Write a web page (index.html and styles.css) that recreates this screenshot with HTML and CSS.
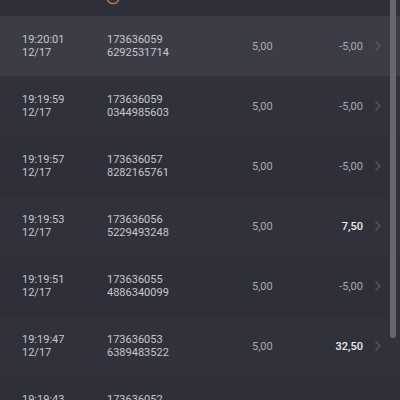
FILE: index.html
```html
<!DOCTYPE html>
<html>
<head>
<meta charset="utf-8">
<link rel="stylesheet" href="styles.css">
</head>
<body>
<div class="screen">
  <div class="top">
    <svg class="spinner" width="16" height="16" viewBox="0 0 16 16"><path d="M2.5 6 A6 6 0 0 0 13.5 6" fill="none" stroke="#b8875a" stroke-width="1.4"/></svg>
  </div>
  <div class="list">
    <div class="row active">
      <div class="c time">19:20:01<br>12/17</div>
      <div class="c id">173636059<br>6292531714</div>
      <div class="c bet">5,00</div>
      <div class="c win">-5,00</div>
      <svg class="chev" width="8" height="12" viewBox="0 0 8 12"><path d="M1.5 1.5 L6 6 L1.5 10.5" fill="none" stroke="#5e5e69" stroke-width="1.1"/></svg>
    </div>
    <div class="row">
      <div class="c time">19:19:59<br>12/17</div>
      <div class="c id">173636059<br>0344985603</div>
      <div class="c bet">5,00</div>
      <div class="c win">-5,00</div>
      <svg class="chev" width="8" height="12" viewBox="0 0 8 12"><path d="M1.5 1.5 L6 6 L1.5 10.5" fill="none" stroke="#5e5e69" stroke-width="1.1"/></svg>
    </div>
    <div class="row alt">
      <div class="c time">19:19:57<br>12/17</div>
      <div class="c id">173636057<br>8282165761</div>
      <div class="c bet">5,00</div>
      <div class="c win">-5,00</div>
      <svg class="chev" width="8" height="12" viewBox="0 0 8 12"><path d="M1.5 1.5 L6 6 L1.5 10.5" fill="none" stroke="#5e5e69" stroke-width="1.1"/></svg>
    </div>
    <div class="row">
      <div class="c time">19:19:53<br>12/17</div>
      <div class="c id">173636056<br>5229493248</div>
      <div class="c bet">5,00</div>
      <div class="c win pos">7,50</div>
      <svg class="chev" width="8" height="12" viewBox="0 0 8 12"><path d="M1.5 1.5 L6 6 L1.5 10.5" fill="none" stroke="#5e5e69" stroke-width="1.1"/></svg>
    </div>
    <div class="row alt">
      <div class="c time">19:19:51<br>12/17</div>
      <div class="c id">173636055<br>4886340099</div>
      <div class="c bet">5,00</div>
      <div class="c win">-5,00</div>
      <svg class="chev" width="8" height="12" viewBox="0 0 8 12"><path d="M1.5 1.5 L6 6 L1.5 10.5" fill="none" stroke="#5e5e69" stroke-width="1.1"/></svg>
    </div>
    <div class="row">
      <div class="c time">19:19:47<br>12/17</div>
      <div class="c id">173636053<br>6389483522</div>
      <div class="c bet">5,00</div>
      <div class="c win pos">32,50</div>
      <svg class="chev" width="8" height="12" viewBox="0 0 8 12"><path d="M1.5 1.5 L6 6 L1.5 10.5" fill="none" stroke="#5e5e69" stroke-width="1.1"/></svg>
    </div>
    <div class="row alt">
      <div class="c time">19:19:43<br>12/17</div>
      <div class="c id">173636052<br>1208817390</div>
      <div class="c bet">5,00</div>
      <div class="c win">-5,00</div>
      <svg class="chev" width="8" height="12" viewBox="0 0 8 12"><path d="M1.5 1.5 L6 6 L1.5 10.5" fill="none" stroke="#5e5e69" stroke-width="1.1"/></svg>
    </div>
  </div>
  <div class="scrollbar"></div>
</div>
</body>
</html>
```
FILE: styles.css
```css
html, body {
  margin: 0;
  padding: 0;
  background: #30303b;
}
.screen {
  position: relative;
  width: 400px;
  height: 400px;
  overflow: hidden;
  background: #30303b;
  font-family: Roboto, "Liberation Sans", sans-serif;
  font-size: 11px;
  line-height: 13px;
  color: #c6c6cb;
}
.top {
  height: 16px;
  position: relative;
}
.spinner {
  position: absolute;
  left: 105px;
  top: -6px;
}
.list {
  display: flex;
  flex-direction: column;
}
.row {
  height: 60px;
  display: flex;
  align-items: center;
  background: #31313c;
}
.row.alt {
  background: #2f2f3a;
}
.row.active {
  background: #3c3c47;
}
.c.time {
  margin-left: 22px;
  width: 85px;
}
.c.id {
  width: 145px;
}
.c.bet {
  width: 40px;
  color: #a9a9b0;
}
.c.win {
  width: 71px;
  text-align: right;
  color: #a9a9b0;
}
.c.win.pos {
  color: #ececef;
  font-weight: 500;
}
.chev {
  margin-left: 11px;
}
.scrollbar {
  position: absolute;
  left: 390px;
  top: 0;
  width: 6px;
  height: 338px;
  background: #66666c;
  border-radius: 0 0 3px 3px;
}
```
